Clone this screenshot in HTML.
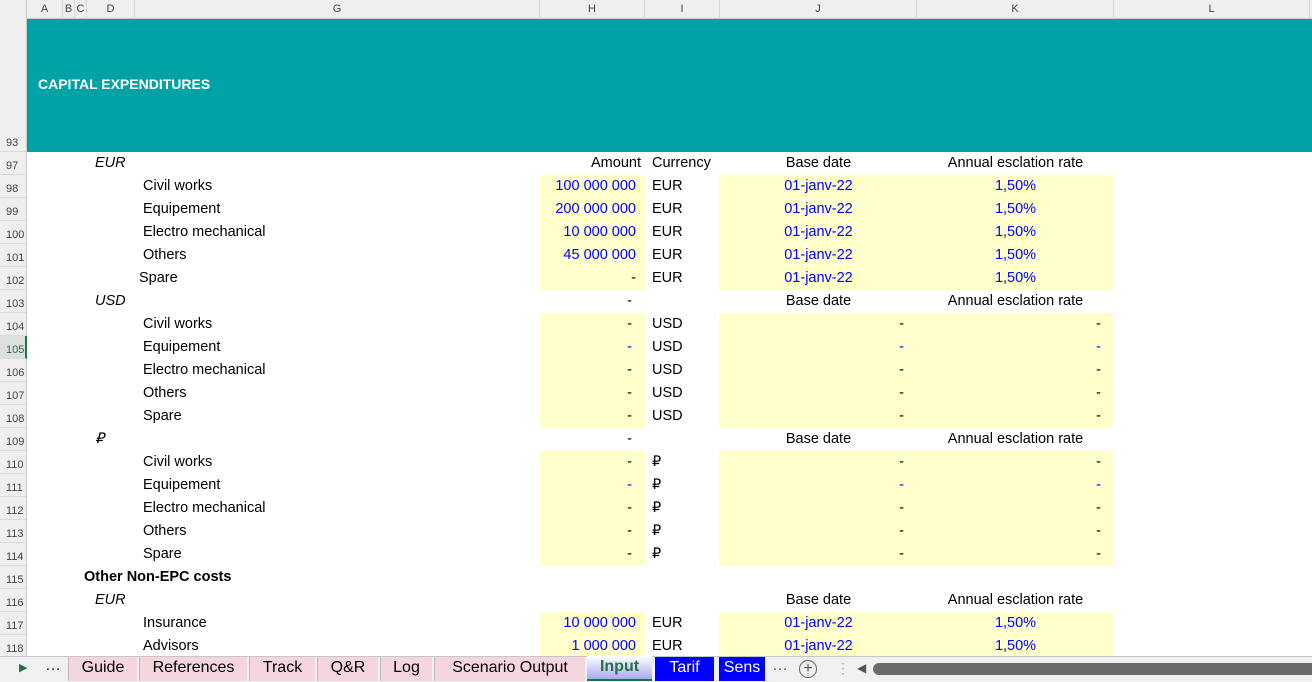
<!DOCTYPE html>
<html><head><meta charset="utf-8"><style>
*{margin:0;padding:0;box-sizing:border-box}
body{width:1312px;height:682px;overflow:hidden;background:#fff;font-family:"Liberation Sans",sans-serif;position:relative}
.ch{position:absolute;top:0;height:19px;background:#efefef;border-bottom:1px solid #c8c8c8}
.cl{position:absolute;top:0;height:19px;line-height:19px;font-size:11px;color:#444;text-align:center;border-right:1px solid #d6d6d6}
.rh{position:absolute;left:0;width:27px;background:#efefef;border-right:1px solid #c8c8c8;border-bottom:1px solid #dadada;font-size:11px;color:#444;text-align:left;padding-left:6px;line-height:23px;padding-top:3px}
.r{position:absolute;left:27px;width:1285px;height:23px;font-size:14.5px;line-height:23px;color:#000}
.r span{position:absolute;top:0;white-space:nowrap}
.y{background:#ffffcc;height:23px}
.b{color:#0000ff}
</style></head><body>
<div class="ch" style="left:0;width:1312px"></div>
<div class="cl" style="left:27px;width:36px">A</div>
<div class="cl" style="left:63px;width:12px">B</div>
<div class="cl" style="left:75px;width:12px">C</div>
<div class="cl" style="left:87px;width:48px">D</div>
<div class="cl" style="left:135px;width:405px">G</div>
<div class="cl" style="left:540px;width:105px">H</div>
<div class="cl" style="left:645px;width:75px">I</div>
<div class="cl" style="left:720px;width:197px">J</div>
<div class="cl" style="left:917px;width:197px">K</div>
<div class="cl" style="left:1114px;width:196px">L</div>
<div style="position:absolute;left:0;top:0;width:27px;height:19px;background:#efefef;border-right:1px solid #c8c8c8"></div>

<div style="position:absolute;left:27px;top:19px;width:1285px;height:133px;background:#00a2a5"></div>
<div style="position:absolute;left:38px;top:76px;color:#fff;font-weight:bold;font-size:14px">CAPITAL EXPENDITURES</div>
<div class="rh" style="top:19px;height:133px;line-height:20px;padding-top:114px">93</div>

<div class="rh" style="top:152px;height:23px">97</div>
<div class="rh" style="top:175px;height:23px">98</div>
<div class="rh" style="top:198px;height:23px">99</div>
<div class="rh" style="top:221px;height:23px">100</div>
<div class="rh" style="top:244px;height:23px">101</div>
<div class="rh" style="top:267px;height:23px">102</div>
<div class="rh" style="top:290px;height:23px">103</div>
<div class="rh" style="top:313px;height:23px">104</div>
<div class="rh" style="top:336px;height:23px;background:#dedede;color:#217346;border-right:2px solid #217346">105</div>
<div class="rh" style="top:359px;height:23px">106</div>
<div class="rh" style="top:382px;height:23px">107</div>
<div class="rh" style="top:405px;height:23px">108</div>
<div class="rh" style="top:428px;height:23px">109</div>
<div class="rh" style="top:451px;height:23px">110</div>
<div class="rh" style="top:474px;height:23px">111</div>
<div class="rh" style="top:497px;height:23px">112</div>
<div class="rh" style="top:520px;height:23px">113</div>
<div class="rh" style="top:543px;height:23px">114</div>
<div class="rh" style="top:566px;height:23px">115</div>
<div class="rh" style="top:589px;height:23px">116</div>
<div class="rh" style="top:612px;height:23px">117</div>
<div class="rh" style="top:635px;height:23px">118</div>

<!-- 97 -->
<div class="r" style="top:152px"><span style="left:68px;font-style:italic">EUR</span><span style="right:671px">Amount</span><span style="left:625px">Currency</span><span style="left:693px;width:197px;text-align:center">Base date</span><span style="left:890px;width:197px;text-align:center">Annual esclation rate</span></div>
<!-- EUR rows -->
<div class="r" style="top:175px"><span class="y" style="left:513px;width:105px"></span><span class="y" style="left:692px;width:394px"></span><span style="left:116px">Civil works</span><span class="b" style="right:676px">100 000 000</span><span style="left:625px">EUR</span><span class="b" style="left:693px;width:197px;text-align:center">01-janv-22</span><span class="b" style="left:890px;width:197px;text-align:center">1,50%</span></div>
<div class="r" style="top:198px"><span class="y" style="left:513px;width:105px"></span><span class="y" style="left:692px;width:394px"></span><span style="left:116px">Equipement</span><span class="b" style="right:676px">200 000 000</span><span style="left:625px">EUR</span><span class="b" style="left:693px;width:197px;text-align:center">01-janv-22</span><span class="b" style="left:890px;width:197px;text-align:center">1,50%</span></div>
<div class="r" style="top:221px"><span class="y" style="left:513px;width:105px"></span><span class="y" style="left:692px;width:394px"></span><span style="left:116px">Electro mechanical</span><span class="b" style="right:676px">10 000 000</span><span style="left:625px">EUR</span><span class="b" style="left:693px;width:197px;text-align:center">01-janv-22</span><span class="b" style="left:890px;width:197px;text-align:center">1,50%</span></div>
<div class="r" style="top:244px"><span class="y" style="left:513px;width:105px"></span><span class="y" style="left:692px;width:394px"></span><span style="left:116px">Others</span><span class="b" style="right:676px">45 000 000</span><span style="left:625px">EUR</span><span class="b" style="left:693px;width:197px;text-align:center">01-janv-22</span><span class="b" style="left:890px;width:197px;text-align:center">1,50%</span></div>
<div class="r" style="top:267px"><span class="y" style="left:513px;width:105px"></span><span class="y" style="left:692px;width:394px"></span><span style="left:112px">Spare</span><span style="right:676px">-</span><span style="left:625px">EUR</span><span class="b" style="left:693px;width:197px;text-align:center">01-janv-22</span><span class="b" style="left:890px;width:197px;text-align:center">1,50%</span></div>
<!-- 103 USD -->
<div class="r" style="top:290px"><span style="left:68px;font-style:italic">USD</span><span style="right:680px">-</span><span style="left:693px;width:197px;text-align:center">Base date</span><span style="left:890px;width:197px;text-align:center">Annual esclation rate</span></div>
<div class="r" style="top:313px"><span class="y" style="left:513px;width:105px"></span><span class="y" style="left:692px;width:394px"></span><span style="left:116px">Civil works</span><span style="right:680px">-</span><span style="left:625px">USD</span><span style="right:408px">-</span><span style="right:211px">-</span></div>
<div class="r" style="top:336px"><span class="y" style="left:513px;width:105px"></span><span class="y" style="left:692px;width:394px"></span><span style="left:116px">Equipement</span><span class="b" style="right:680px">-</span><span style="left:625px">USD</span><span class="b" style="right:408px">-</span><span class="b" style="right:211px">-</span></div>
<div class="r" style="top:359px"><span class="y" style="left:513px;width:105px"></span><span class="y" style="left:692px;width:394px"></span><span style="left:116px">Electro mechanical</span><span style="right:680px">-</span><span style="left:625px">USD</span><span style="right:408px">-</span><span style="right:211px">-</span></div>
<div class="r" style="top:382px"><span class="y" style="left:513px;width:105px"></span><span class="y" style="left:692px;width:394px"></span><span style="left:116px">Others</span><span style="right:680px">-</span><span style="left:625px">USD</span><span style="right:408px">-</span><span style="right:211px">-</span></div>
<div class="r" style="top:405px"><span class="y" style="left:513px;width:105px"></span><span class="y" style="left:692px;width:394px"></span><span style="left:116px">Spare</span><span style="right:680px">-</span><span style="left:625px">USD</span><span style="right:408px">-</span><span style="right:211px">-</span></div>
<!-- 109 RUB -->
<div class="r" style="top:428px"><span style="left:68px;font-style:italic">₽</span><span style="right:680px">-</span><span style="left:693px;width:197px;text-align:center">Base date</span><span style="left:890px;width:197px;text-align:center">Annual esclation rate</span></div>
<div class="r" style="top:451px"><span class="y" style="left:513px;width:105px"></span><span class="y" style="left:692px;width:394px"></span><span style="left:116px">Civil works</span><span style="right:680px">-</span><span style="left:625px">₽</span><span style="right:408px">-</span><span style="right:211px">-</span></div>
<div class="r" style="top:474px"><span class="y" style="left:513px;width:105px"></span><span class="y" style="left:692px;width:394px"></span><span style="left:116px">Equipement</span><span class="b" style="right:680px">-</span><span style="left:625px">₽</span><span class="b" style="right:408px">-</span><span class="b" style="right:211px">-</span></div>
<div class="r" style="top:497px"><span class="y" style="left:513px;width:105px"></span><span class="y" style="left:692px;width:394px"></span><span style="left:116px">Electro mechanical</span><span style="right:680px">-</span><span style="left:625px">₽</span><span style="right:408px">-</span><span style="right:211px">-</span></div>
<div class="r" style="top:520px"><span class="y" style="left:513px;width:105px"></span><span class="y" style="left:692px;width:394px"></span><span style="left:116px">Others</span><span style="right:680px">-</span><span style="left:625px">₽</span><span style="right:408px">-</span><span style="right:211px">-</span></div>
<div class="r" style="top:543px"><span class="y" style="left:513px;width:105px"></span><span class="y" style="left:692px;width:394px"></span><span style="left:116px">Spare</span><span style="right:680px">-</span><span style="left:625px">₽</span><span style="right:408px">-</span><span style="right:211px">-</span></div>
<!-- 115 -->
<div class="r" style="top:566px"><span style="left:57px;font-weight:bold">Other Non-EPC costs</span></div>
<div class="r" style="top:589px"><span style="left:68px;font-style:italic">EUR</span><span style="left:693px;width:197px;text-align:center">Base date</span><span style="left:890px;width:197px;text-align:center">Annual esclation rate</span></div>
<div class="r" style="top:612px"><span class="y" style="left:513px;width:105px"></span><span class="y" style="left:692px;width:394px"></span><span style="left:116px">Insurance</span><span class="b" style="right:676px">10 000 000</span><span style="left:625px">EUR</span><span class="b" style="left:693px;width:197px;text-align:center">01-janv-22</span><span class="b" style="left:890px;width:197px;text-align:center">1,50%</span></div>
<div class="r" style="top:635px"><span class="y" style="left:513px;width:105px"></span><span class="y" style="left:692px;width:394px"></span><span style="left:116px">Advisors</span><span class="b" style="right:676px">1 000 000</span><span style="left:625px">EUR</span><span class="b" style="left:693px;width:197px;text-align:center">01-janv-22</span><span class="b" style="left:890px;width:197px;text-align:center">1,50%</span></div>

<!-- tab bar -->
<div style="position:absolute;left:0;top:656px;width:1312px;height:26px;background:#f0f0f0;border-top:1px solid #c6c6c6;font-size:16px;line-height:22px">
<span style="position:absolute;left:19px;top:0;color:#217346;font-size:11px">▶</span>
<span style="position:absolute;left:45px;top:-2px;color:#222">…</span>
<span style="position:absolute;left:68px;top:0;width:69px;height:24px;background:#f6d6de;border-left:1px solid #bbb;text-align:center">Guide</span>
<span style="position:absolute;left:139px;top:0;width:108px;height:24px;background:#f6d6de;border-left:1px solid #bbb;text-align:center">References</span>
<span style="position:absolute;left:249px;top:0;width:66px;height:24px;background:#f6d6de;border-left:1px solid #bbb;text-align:center">Track</span>
<span style="position:absolute;left:317px;top:0;width:61px;height:24px;background:#f6d6de;border-left:1px solid #bbb;text-align:center">Q&amp;R</span>
<span style="position:absolute;left:380px;top:0;width:52px;height:24px;background:#f6d6de;border-left:1px solid #bbb;text-align:center">Log</span>
<span style="position:absolute;left:434px;top:0;width:151px;height:24px;background:#f6d6de;border-left:1px solid #bbb;text-align:center">Scenario Output</span>
<span style="position:absolute;left:587px;top:-1px;width:65px;height:25px;background:linear-gradient(#ffffff,#a9a9f0);border-bottom:2px solid #217346;text-align:center;font-weight:bold;color:#217346">Input</span>
<span style="position:absolute;left:655px;top:0;width:59px;height:24px;background:#0000ff;color:#fff;text-align:center">Tarif</span>
<span style="position:absolute;left:719px;top:0;width:46px;height:24px;background:#0000ff;color:#fff;text-align:center">Sens</span>
<span style="position:absolute;left:772px;top:-2px;color:#217346">…</span>
<span style="position:absolute;left:799px;top:3px;width:18px;height:18px;border:1px solid #666;border-radius:50%;text-align:center;line-height:15px;font-size:16px;color:#555">+</span>
<span style="position:absolute;left:836px;top:0;color:#aaa;font-size:14px">⋮</span>
<span style="position:absolute;left:857px;top:0;color:#555;font-size:12px">◀</span>
<span style="position:absolute;left:873px;top:6px;width:440px;height:12px;background:#6b6b6b;border-radius:6px 0 0 6px"></span>
</div>
</body></html>
